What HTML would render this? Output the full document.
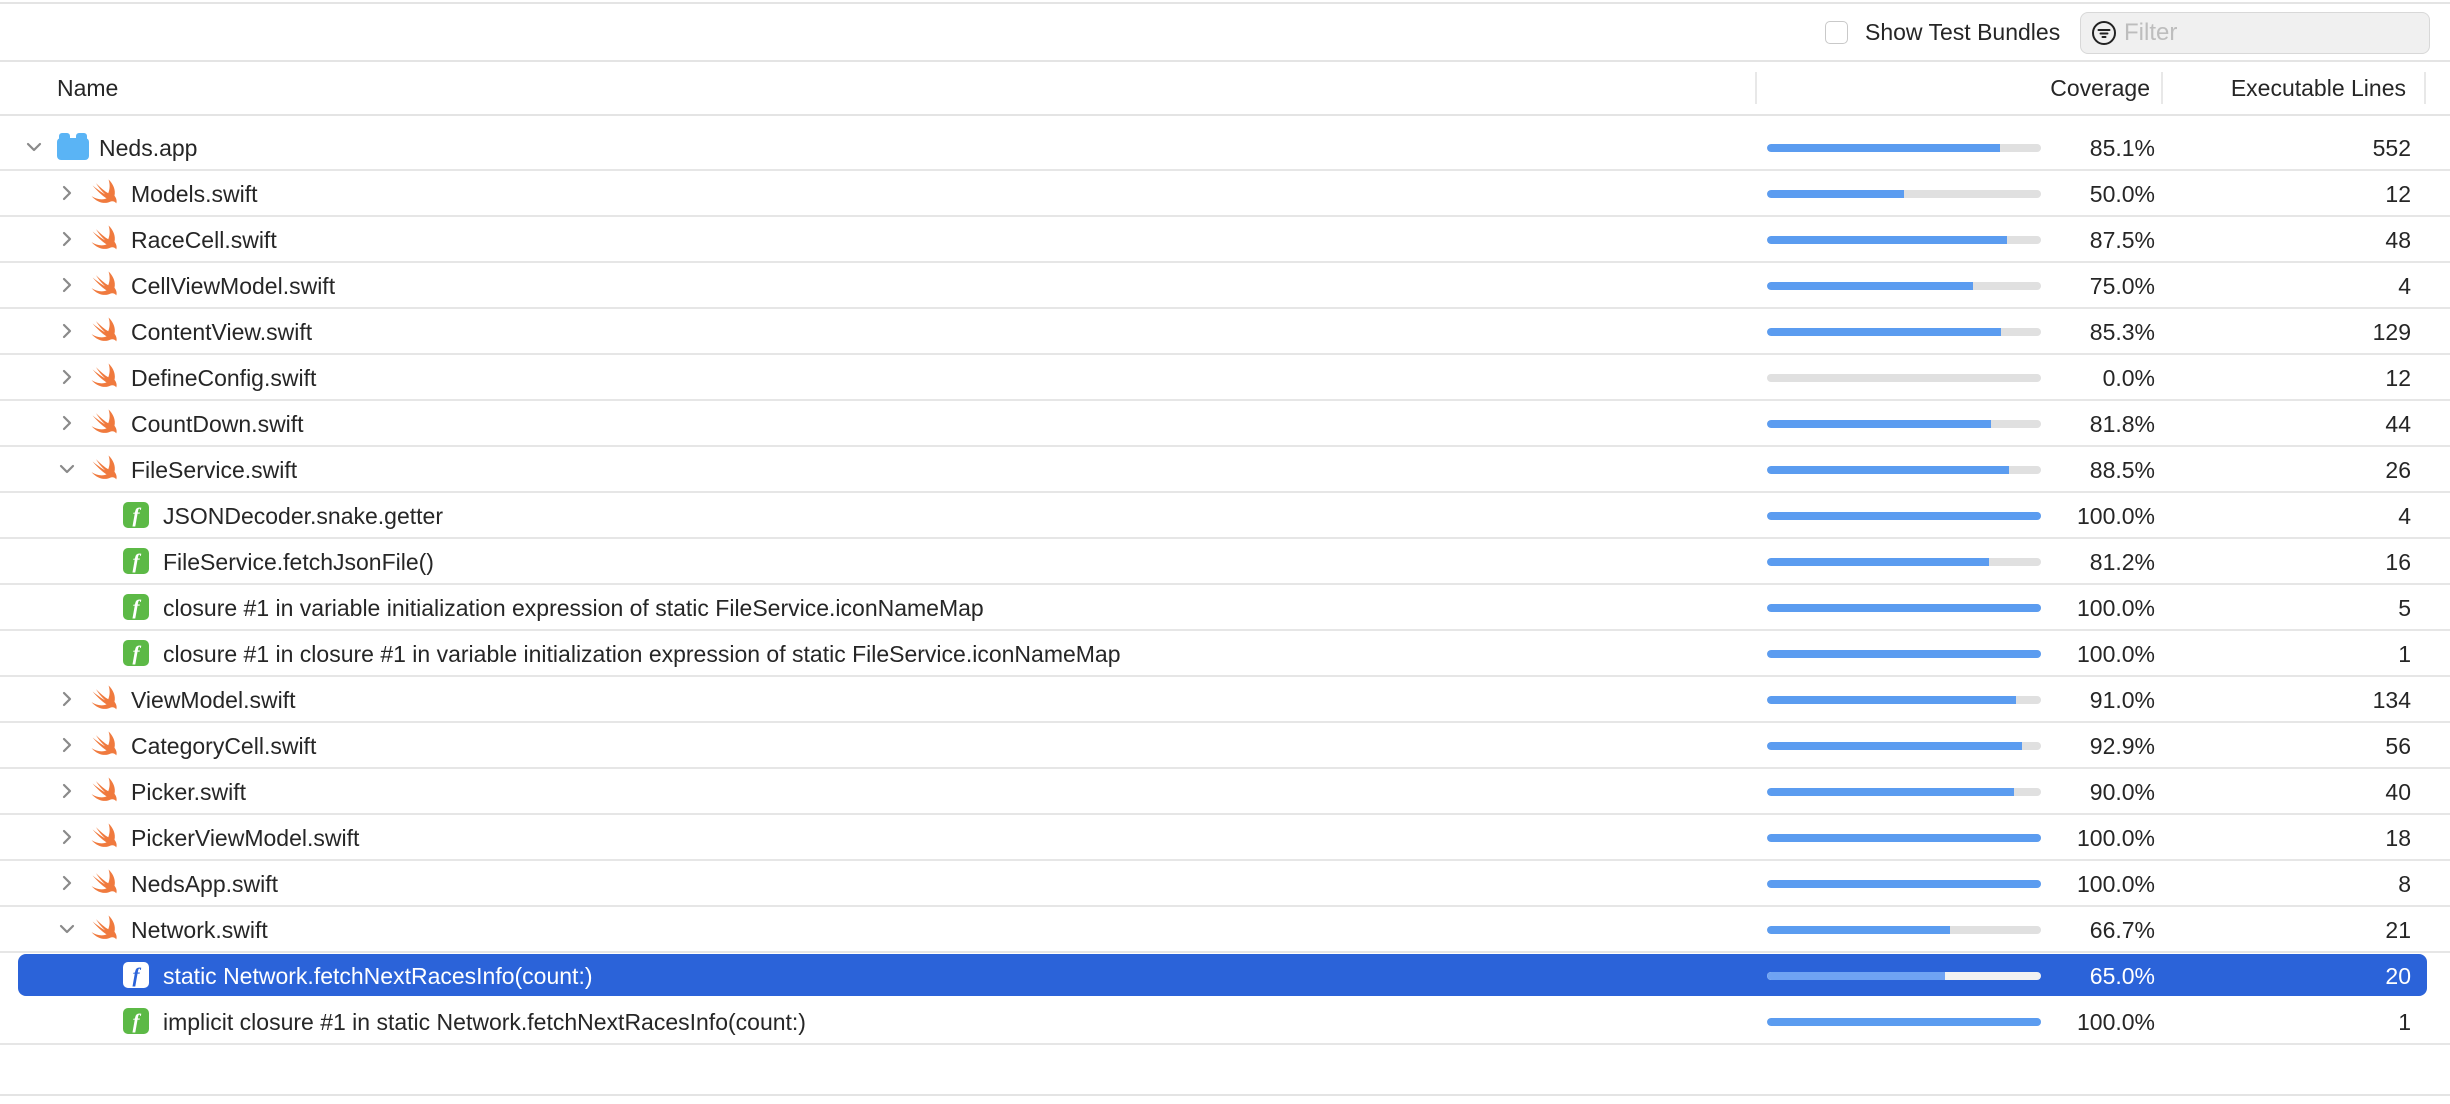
<!DOCTYPE html>
<html><head><meta charset="utf-8"><style>
*{margin:0;padding:0;box-sizing:border-box}
body{width:2450px;height:1104px;background:#fff;position:relative;overflow:hidden;font-family:"Liberation Sans",Arial,sans-serif;color:#262626;font-size:23px}
.hl{position:absolute;left:0;width:2450px;height:2px;background:#e4e4e4}
.r{position:absolute;left:0;width:2450px;height:46px;border-bottom:2px solid #e6e6e6}
.r>*{position:absolute}
.sel{left:18px;right:23px;top:1px;bottom:1px;border-radius:8px;background:#2b63d9}
.ch{top:50%;margin-top:-8px;width:16px;height:16px}
.ic{top:50%}
.sw{width:34px;height:34px;margin-top:-17px;left:88px}
.fn{width:26px;height:26px;margin-top:-13px;left:123px;border-radius:5px;background:#5cb946;color:#fff;font-style:italic;font-weight:bold;font-family:"Liberation Serif",serif;font-size:21px;text-align:center;line-height:26px}
.nm{top:1px;height:100%;display:flex;align-items:center;white-space:nowrap}
.bar{left:1767px;width:274px;height:8px;top:50%;margin-top:-3px;border-radius:4px;background:#e0e0e0;overflow:hidden}
.bar i{display:block;height:100%;background:#5b9cf0;border-radius:4px 0 0 4px}
.pc{right:295px;top:1px;height:100%;display:flex;align-items:center}
.ln{right:39px;top:1px;height:100%;display:flex;align-items:center}
.s .nm,.s .pc,.s .ln{color:#fff}
.s .fn{background:#fff;color:#2b63d9}
.s .bar{background:#f2f2f2}
.s .bar i{background:#6fa3f3}
</style></head><body>
<div class="hl" style="top:2px"></div>
<div class="hl" style="top:60px"></div>
<div class="hl" style="top:114px"></div>

<div style="position:absolute;left:1825px;top:21px;width:23px;height:23px;border:1.5px solid #c9c9c9;border-radius:5px;background:#fff"></div>
<div style="position:absolute;left:1865px;top:19px;line-height:27px">Show Test Bundles</div>
<div style="position:absolute;left:2080px;top:12px;width:350px;height:42px;border:1.5px solid #d8d8d8;border-radius:8px;background:#f0f0f0"></div>
<svg style="position:absolute;left:2090px;top:19px" width="28" height="28" viewBox="0 0 28 28"><circle cx="14" cy="14" r="11" fill="none" stroke="#222" stroke-width="2"/><path d="M8.5 11h11M10.5 14.5h7M12.5 18h3" stroke="#222" stroke-width="2" stroke-linecap="round"/></svg>
<div style="position:absolute;left:2124px;top:19px;font-size:24px;color:#bdbdbd">Filter</div>

<div style="position:absolute;left:57px;top:75px">Name</div>
<div style="position:absolute;left:1755px;top:72px;width:2px;height:32px;background:#e8e8e8"></div>
<div style="position:absolute;right:300px;top:75px">Coverage</div>
<div style="position:absolute;left:2161px;top:72px;width:2px;height:32px;background:#e8e8e8"></div>
<div style="position:absolute;right:44px;top:75px">Executable Lines</div>
<div style="position:absolute;left:2424px;top:72px;width:2px;height:32px;background:#e8e8e8"></div>

<svg width="0" height="0" style="position:absolute"><defs>
<symbol id="cr" viewBox="0 0 16 16"><path d="M5 2l6 6-6 6" fill="none" stroke="#8a8a8a" stroke-width="2.2" stroke-linecap="round" stroke-linejoin="round"/></symbol>
<symbol id="cd" viewBox="0 0 16 16"><path d="M2 5l6 6 6-6" fill="none" stroke="#8a8a8a" stroke-width="2.2" stroke-linecap="round" stroke-linejoin="round"/></symbol>
<symbol id="sw" viewBox="0 0 24 24"><path d="M14.5 2.5c3.2 3 5.2 7.3 4.2 11.4 1.6 2 1.8 4.2 1.2 5.4-1-1.6-3-1.7-4.3-1.1-3.3 1.6-8.6 1.1-13.1-4 3.3 2.1 7.4 3 10.6 1.6C9.6 13.6 6 10 3.2 6.6c2.3 2 6.3 4.9 8.900 6.4C9.4 10.4 7.3 7.7 5.6 5c2.7 2.8 6.6 6 8.7 7.2 1.2-3.1 1.300-6.4.2-9.7z" fill="#f07a3e"/></symbol>
</defs></svg>

<div class="r" style="top:125px"><svg class="ch" style="left:26px"><use href="#cd"/></svg>
<svg class="ic" style="left:57px;top:50%;margin-top:-14px" width="32" height="27" viewBox="0 0 32 27"><rect x="0" y="5" width="32" height="22" rx="4" fill="#5ab4f5"/><rect x="2" y="0" width="11" height="9" rx="3" fill="#5ab4f5"/><rect x="19" y="0" width="11" height="9" rx="3" fill="#5ab4f5"/></svg>
<div class="nm" style="left:99px">Neds.app</div><div class="bar"><i style="width:85.1%"></i></div><div class="pc">85.1%</div><div class="ln">552</div></div>

<div class="r" style="top:171px"><svg class="ch" style="left:59px"><use href="#cr"/></svg><svg class="ic sw"><use href="#sw"/></svg><div class="nm" style="left:131px">Models.swift</div><div class="bar"><i style="width:50%"></i></div><div class="pc">50.0%</div><div class="ln">12</div></div>
<div class="r" style="top:217px"><svg class="ch" style="left:59px"><use href="#cr"/></svg><svg class="ic sw"><use href="#sw"/></svg><div class="nm" style="left:131px">RaceCell.swift</div><div class="bar"><i style="width:87.5%"></i></div><div class="pc">87.5%</div><div class="ln">48</div></div>
<div class="r" style="top:263px"><svg class="ch" style="left:59px"><use href="#cr"/></svg><svg class="ic sw"><use href="#sw"/></svg><div class="nm" style="left:131px">CellViewModel.swift</div><div class="bar"><i style="width:75%"></i></div><div class="pc">75.0%</div><div class="ln">4</div></div>
<div class="r" style="top:309px"><svg class="ch" style="left:59px"><use href="#cr"/></svg><svg class="ic sw"><use href="#sw"/></svg><div class="nm" style="left:131px">ContentView.swift</div><div class="bar"><i style="width:85.3%"></i></div><div class="pc">85.3%</div><div class="ln">129</div></div>
<div class="r" style="top:355px"><svg class="ch" style="left:59px"><use href="#cr"/></svg><svg class="ic sw"><use href="#sw"/></svg><div class="nm" style="left:131px">DefineConfig.swift</div><div class="bar"><i style="width:0%"></i></div><div class="pc">0.0%</div><div class="ln">12</div></div>
<div class="r" style="top:401px"><svg class="ch" style="left:59px"><use href="#cr"/></svg><svg class="ic sw"><use href="#sw"/></svg><div class="nm" style="left:131px">CountDown.swift</div><div class="bar"><i style="width:81.8%"></i></div><div class="pc">81.8%</div><div class="ln">44</div></div>
<div class="r" style="top:447px"><svg class="ch" style="left:59px"><use href="#cd"/></svg><svg class="ic sw"><use href="#sw"/></svg><div class="nm" style="left:131px">FileService.swift</div><div class="bar"><i style="width:88.5%"></i></div><div class="pc">88.5%</div><div class="ln">26</div></div>
<div class="r" style="top:493px"><div class="ic fn">f</div><div class="nm" style="left:163px">JSONDecoder.snake.getter</div><div class="bar"><i style="width:100%"></i></div><div class="pc">100.0%</div><div class="ln">4</div></div>
<div class="r" style="top:539px"><div class="ic fn">f</div><div class="nm" style="left:163px">FileService.fetchJsonFile()</div><div class="bar"><i style="width:81.2%"></i></div><div class="pc">81.2%</div><div class="ln">16</div></div>
<div class="r" style="top:585px"><div class="ic fn">f</div><div class="nm" style="left:163px">closure #1 in variable initialization expression of static FileService.iconNameMap</div><div class="bar"><i style="width:100%"></i></div><div class="pc">100.0%</div><div class="ln">5</div></div>
<div class="r" style="top:631px"><div class="ic fn">f</div><div class="nm" style="left:163px">closure #1 in closure #1 in variable initialization expression of static FileService.iconNameMap</div><div class="bar"><i style="width:100%"></i></div><div class="pc">100.0%</div><div class="ln">1</div></div>
<div class="r" style="top:677px"><svg class="ch" style="left:59px"><use href="#cr"/></svg><svg class="ic sw"><use href="#sw"/></svg><div class="nm" style="left:131px">ViewModel.swift</div><div class="bar"><i style="width:91%"></i></div><div class="pc">91.0%</div><div class="ln">134</div></div>
<div class="r" style="top:723px"><svg class="ch" style="left:59px"><use href="#cr"/></svg><svg class="ic sw"><use href="#sw"/></svg><div class="nm" style="left:131px">CategoryCell.swift</div><div class="bar"><i style="width:92.9%"></i></div><div class="pc">92.9%</div><div class="ln">56</div></div>
<div class="r" style="top:769px"><svg class="ch" style="left:59px"><use href="#cr"/></svg><svg class="ic sw"><use href="#sw"/></svg><div class="nm" style="left:131px">Picker.swift</div><div class="bar"><i style="width:90%"></i></div><div class="pc">90.0%</div><div class="ln">40</div></div>
<div class="r" style="top:815px"><svg class="ch" style="left:59px"><use href="#cr"/></svg><svg class="ic sw"><use href="#sw"/></svg><div class="nm" style="left:131px">PickerViewModel.swift</div><div class="bar"><i style="width:100%"></i></div><div class="pc">100.0%</div><div class="ln">18</div></div>
<div class="r" style="top:861px"><svg class="ch" style="left:59px"><use href="#cr"/></svg><svg class="ic sw"><use href="#sw"/></svg><div class="nm" style="left:131px">NedsApp.swift</div><div class="bar"><i style="width:100%"></i></div><div class="pc">100.0%</div><div class="ln">8</div></div>
<div class="r" style="top:907px"><svg class="ch" style="left:59px"><use href="#cd"/></svg><svg class="ic sw"><use href="#sw"/></svg><div class="nm" style="left:131px">Network.swift</div><div class="bar"><i style="width:66.7%"></i></div><div class="pc">66.7%</div><div class="ln">21</div></div>
<div class="r s" style="top:953px;border-bottom-color:#fff"><div class="sel"></div><div class="ic fn">f</div><div class="nm" style="left:163px">static Network.fetchNextRacesInfo(count:)</div><div class="bar"><i style="width:65%"></i></div><div class="pc">65.0%</div><div class="ln">20</div></div>
<div class="r" style="top:999px"><div class="ic fn">f</div><div class="nm" style="left:163px">implicit closure #1 in static Network.fetchNextRacesInfo(count:)</div><div class="bar"><i style="width:100%"></i></div><div class="pc">100.0%</div><div class="ln">1</div></div>

<div class="hl" style="top:1094px"></div>
</body></html>
